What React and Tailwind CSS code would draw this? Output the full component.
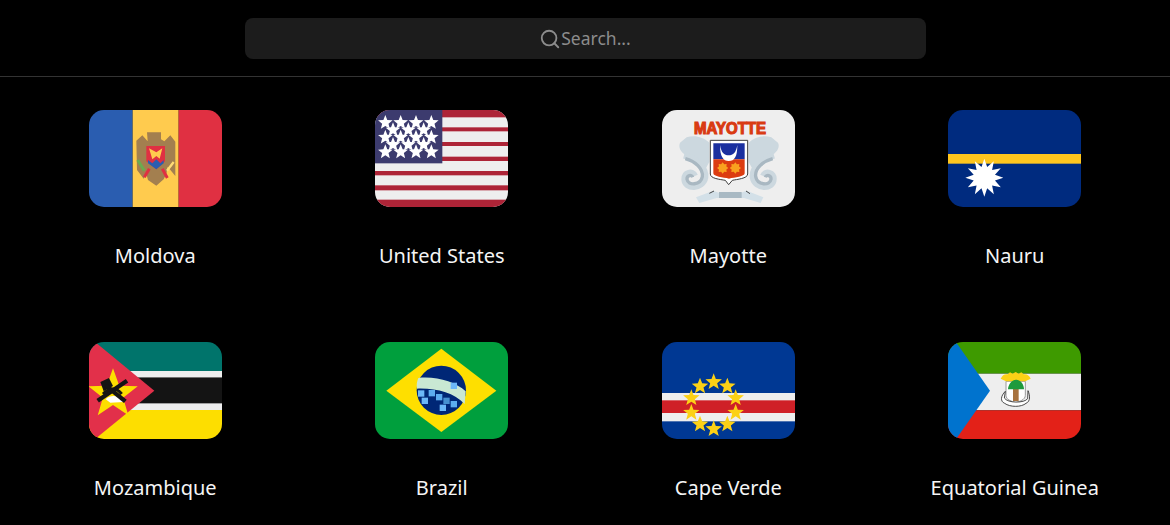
import { Search } from 'lucide-react'

// regular star / burst polygon points
function starPoints(cx, cy, outer, inner, n = 5) {
  const pts = []
  for (let i = 0; i < n * 2; i++) {
    const r = i % 2 === 0 ? outer : inner
    const a = (Math.PI * i) / n - Math.PI / 2
    pts.push(`${(cx + r * Math.cos(a)).toFixed(1)},${(cy + r * Math.sin(a)).toFixed(1)}`)
  }
  return pts.join(' ')
}

function Flag({ children }) {
  return (
    <svg viewBox="26 30 399 291" className="h-[97px] w-[133px] rounded-[15px]">
      {children}
    </svg>
  )
}

function Moldova() {
  return (
    <Flag>
      <rect x="26" y="30" width="131" height="291" fill="#2a5db0" />
      <rect x="157" y="30" width="138" height="291" fill="#ffcb4e" />
      <rect x="295" y="30" width="130" height="291" fill="#e03042" />
      <path d="M200 97H242V118L252 124L270 106L285 125V228L262 200L258 222L250 238L228 257L203 240L198 222L190 236L170 210L168 122L186 106L202 124Z" fill="#a37f4f" />
      <path d="M198 138H254V184L228 208L198 184Z" fill="#e03042" />
      <path d="M203 180L216 190L228 178L240 190L250 180V190L228 208L203 190Z" fill="#2a5db0" />
      <path d="M206 145L228 157L246 145L238 176L228 168L216 178Z" fill="#ffcb4e" />
      <path d="M172 180L192 212" stroke="#6bab4f" strokeWidth="9" />
      <path d="M192 232L207 206" stroke="#e03042" strokeWidth="9" />
      <path d="M246 206L261 234" stroke="#e03042" strokeWidth="9" />
      <path d="M260 212L280 186" stroke="#ffdc75" strokeWidth="7" />
    </Flag>
  )
}

function UnitedStates() {
  const stripes = [[30, 22], [82, 12], [126, 12], [170, 13], [213, 13], [256, 15], [299, 22]]
  const stars = [
    [57, 68], [103, 68], [149, 68], [195, 68],
    [80, 90], [126, 90], [172, 90],
    [57, 112], [103, 112], [149, 112], [195, 112],
    [80, 134], [126, 134], [172, 134],
    [57, 156], [103, 156], [149, 156], [195, 156],
  ]
  return (
    <Flag>
      <rect x="26" y="30" width="399" height="291" fill="#eeeeee" />
      {stripes.map(([y, h]) => (
        <rect key={y} x="26" y={y} width="399" height={h} fill="#ad2437" />
      ))}
      <rect x="26" y="30" width="202" height="160" fill="#3c3b6e" />
      {stars.map(([x, y]) => (
        <polygon key={`${x}-${y}`} points={starPoints(x, y, 23, 10)} fill="#ffffff" />
      ))}
    </Flag>
  )
}

function Seahorse(props) {
  return (
    <g {...props}>
      <path d="M100 112C122 104 150 110 168 128V186L156 208C150 184 126 176 106 170C88 162 72 146 80 128Z" fill="#ccd8df" />
      <path d="M92 166C128 176 158 204 155 232C148 268 95 268 94 238C93 218 118 212 124 228" fill="none" stroke="#ccd8df" strokeWidth="20" />
      <path d="M96 176C126 184 150 206 147 230C142 256 104 258 101 238C100 226 115 222 118 232" fill="none" stroke="#a9b8c2" strokeWidth="10" />
    </g>
  )
}

function Mayotte() {
  return (
    <Flag>
      <rect x="26" y="30" width="399" height="291" fill="#eeeeee" />
      <text x="230" y="102" textAnchor="middle" textLength="216" lengthAdjust="spacingAndGlyphs" fontFamily="'Liberation Sans', sans-serif" fontWeight="700" fontSize="47" fill="#d93a12" stroke="#d93a12" strokeWidth="3.5">MAYOTTE</text>
      <Seahorse />
      <Seahorse transform="translate(454 0) scale(-1 1)" />
      {/* ribbon */}
      <path d="M128 292L180 272L196 278H264L280 272L330 292L322 309L272 294H190L138 309Z" fill="#d3e0e8" />
      <rect x="197" y="276" width="68" height="18" fill="#a9b9c3" />
      <path d="M168 280L182 273M278 273L290 281" stroke="#444444" strokeWidth="3" />
      {/* shield */}
      <path d="M171 121H283V222C283 236 250 238 237 241L226 254L216 241C200 238 171 236 171 222Z" fill="#ffffff" stroke="#3d3d3d" strokeWidth="3" />
      <path d="M180 130H274V178H180Z" fill="#1b2f9f" />
      <path d="M180 178H274V220C274 230 245 232 227 236C209 232 180 230 180 220Z" fill="#dc3c10" />
      <path d="M200 135C200 170 210 183 226 183C244 183 252 170 252 135C248 158 240 166 226 166C212 166 204 158 200 135Z" fill="#ffffff" />
      <polygon points={starPoints(208, 204, 17, 12, 8)} fill="#f9a11f" />
      <polygon points={starPoints(246, 204, 17, 12, 8)} fill="#f9a11f" />
    </Flag>
  )
}

function Nauru() {
  return (
    <Flag>
      <rect x="26" y="30" width="399" height="291" fill="#002b7f" />
      <rect x="26" y="162" width="399" height="29" fill="#ffc61e" />
      <polygon points={starPoints(135, 233, 57, 33, 12)} fill="#ffffff" />
    </Flag>
  )
}

function Mozambique() {
  return (
    <Flag>
      <rect x="26" y="30" width="399" height="87" fill="#00746b" />
      <rect x="26" y="117" width="399" height="20" fill="#eeeeee" />
      <rect x="26" y="137" width="399" height="77" fill="#141414" />
      <rect x="26" y="214" width="399" height="20" fill="#eeeeee" />
      <rect x="26" y="234" width="399" height="87" fill="#fdde00" />
      <path d="M26 15L222 176L26 336Z" fill="#e2304a" />
      <polygon points={starPoints(98, 187, 78, 32)} fill="#fdde00" />
      <path d="M76 202C90 188 115 188 130 210L90 212Z" fill="#ffffff" />
      <path d="M60 150L86 138L98 162L70 178Z" fill="#141414" />
      <path d="M76 160L135 208" stroke="#141414" strokeWidth="13" />
      <path d="M140 146L52 206" stroke="#141414" strokeWidth="13" />
      <path d="M68 186C85 168 108 164 124 186" stroke="#141414" strokeWidth="9" fill="none" />
    </Flag>
  )
}

function Brazil() {
  const squares = [
    [155, 175, '#6cb8f8'], [187, 174, '#5cacf0'], [209, 186, '#5cacf0'], [231, 197, '#4690d0'],
    [253, 207, '#5cacf0'], [166, 197, '#6cb8f8'], [220, 218, '#6cb8f8'], [253, 152, '#6cb8f8'],
  ]
  return (
    <Flag>
      <rect x="26" y="30" width="399" height="291" fill="#009f3d" />
      <polygon points="225,50 390,176 225,300 60,176" fill="#fedf00" />
      <circle cx="225" cy="175" r="74" fill="#002776" />
      <path d="M156 138C210 132 268 150 298 178L295 216C262 182 210 168 152 170C150 158 152 148 156 138Z" fill="#c9e8d3" />
      {squares.map(([x, y, c]) => (
        <rect key={`${x}-${y}`} x={x} y={y} width="19" height="19" fill={c} />
      ))}
    </Flag>
  )
}

function CapeVerde() {
  const stars = [
    [181, 150], [222, 163], [247, 198], [247, 242], [222, 277],
    [181, 291], [140, 277], [114, 242], [114, 198], [140, 163],
  ]
  return (
    <Flag>
      <rect x="26" y="30" width="399" height="291" fill="#003893" />
      <rect x="26" y="183" width="399" height="85" fill="#eeeeee" />
      <rect x="26" y="205" width="399" height="38" fill="#cf2027" />
      {stars.map(([x, y]) => (
        <polygon key={`${x}-${y}`} points={starPoints(x, y, 26, 11)} fill="#fcd116" />
      ))}
    </Flag>
  )
}

function EquatorialGuinea() {
  return (
    <Flag>
      <rect x="26" y="30" width="399" height="95" fill="#3e9a00" />
      <rect x="26" y="125" width="399" height="110" fill="#eeeeee" />
      <rect x="26" y="235" width="399" height="86" fill="#e32118" />
      <path d="M26 -4L152 176L26 356Z" fill="#0073ce" />
      <path d="M200 148H258V190C258 204 240 208 229 212C218 208 200 204 200 190Z" fill="#ffffff" stroke="#9a9a9a" strokeWidth="3" />
      <path d="M184 140C190 128 196 125 205 127L212 121L220 125L229 120L238 125L246 121L253 127C262 125 270 130 274 140L258 148H200Z" fill="#fcd116" />
      <rect x="221" y="165" width="17" height="42" fill="#a8733f" />
      <path d="M206 172C206 160 216 143 230 143C246 143 254 160 254 172Z" fill="#1f9a3c" />
      <path d="M198 178C184 192 182 208 196 214C212 226 246 226 260 214C274 208 272 190 266 176L265 200C255 214 205 214 195 198Z" fill="#ffffff" stroke="#2a2a2a" strokeWidth="2.5" />
    </Flag>
  )
}

const countries = [
  { name: 'Moldova', Flag: Moldova },
  { name: 'United States', Flag: UnitedStates },
  { name: 'Mayotte', Flag: Mayotte },
  { name: 'Nauru', Flag: Nauru },
  { name: 'Mozambique', Flag: Mozambique },
  { name: 'Brazil', Flag: Brazil },
  { name: 'Cape Verde', Flag: CapeVerde },
  { name: 'Equatorial Guinea', Flag: EquatorialGuinea },
]

export default function App() {
  return (
    <div className="h-screen overflow-hidden bg-black font-['Noto_Sans',sans-serif]">
      <header className="flex h-[77px] justify-center border-b border-[#333333] pt-[18px]">
        <div className="flex h-[41px] w-[681px] items-center justify-center rounded-lg bg-[#1c1c1c] text-[17.5px] text-[#8c8c8c]">
          <Search size={22} strokeWidth={2} />
          <span>Search...</span>
        </div>
      </header>
      <main className="grid grid-cols-4 gap-y-[73px] px-3 pt-[33px]">
        {countries.map(({ name, Flag: CountryFlag }) => (
          <div key={name} className="flex flex-col items-center">
            <CountryFlag />
            <p className="mt-[34px] h-7 text-[20px] leading-[30px] font-[450] text-[#f5f5f5]">{name}</p>
          </div>
        ))}
      </main>
    </div>
  )
}
